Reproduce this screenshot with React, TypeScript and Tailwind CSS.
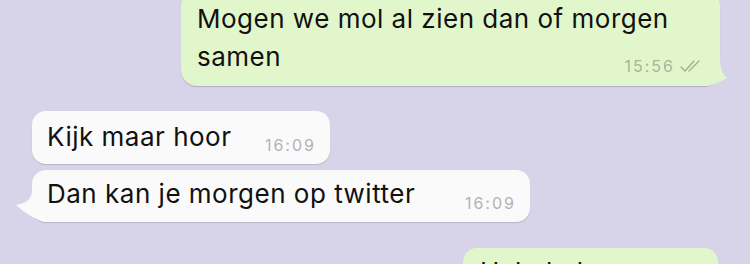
import React from 'react';

const font = { fontFamily: 'Inter, "Liberation Sans", sans-serif' };

// tail on outgoing (green) bubble, bottom right
function OutTail() {
  return (
    <svg className="absolute right-[-8px] bottom-0" width="28" height="32" viewBox="0 0 28 32">
      <path d="M20 0 C20 12 21 19 27 24 C22 27 16 30 8 32 L0 32 L0 0 Z" fill="#e1f7cb" />
    </svg>
  );
}

// tail on incoming (white) bubble, bottom left
function InTail() {
  return (
    <svg className="absolute left-[-16px] bottom-0" width="40" height="32" viewBox="0 0 40 32">
      <path d="M16 0 C16 8 12 13 0 15 C7 21 18 30 30 32 L40 32 L40 0 Z" fill="#fafafa" />
    </svg>
  );
}

function Checks() {
  return (
    <svg width="24" height="14" viewBox="0 0 24 14" className="ml-[5px]">
      <path d="M1 8 L5 12 L14 2" fill="none" stroke="#a2b296" strokeWidth="1.4" strokeLinecap="round" />
      <path d="M9 12 L19 2" fill="none" stroke="#a2b296" strokeWidth="1.4" strokeLinecap="round" />
    </svg>
  );
}

export default function App() {
  return (
    <div className="w-[750px] h-[264px] overflow-hidden bg-[#d7d4ea] flex flex-col" style={font}>
      {/* outgoing */}
      <div className="flex justify-end pr-[30px] mt-[-10px]">
        <div className="relative w-[539px] h-[96px] bg-[#e1f7cb] rounded-[16px] shadow-[0_1px_1px_rgba(0,0,0,0.18)] pl-[16px] pt-[10px]">
          <OutTail />
          <div className="relative text-[26px] leading-[38px] text-[#111] tracking-[0.5px]">
            Mogen we mol al zien dan of morgen<br />samen
          </div>
          <div className="absolute right-[16px] bottom-[10px] flex items-center text-[16px] leading-[20px] tracking-[2px] text-[#a6b59a]">
            15:56<Checks />
          </div>
        </div>
      </div>

      {/* incoming */}
      <div className="flex flex-col gap-[6px] pl-[32px] mt-[25px]">
        <div className="relative w-[298px] h-[53px] bg-[#fafafa] rounded-[14px] shadow-[0_1px_1px_rgba(0,0,0,0.15)] flex items-start pl-[15px] pt-[11px]">
          <span className="text-[26px] leading-[30px] text-[#111] tracking-[0.5px]">Kijk maar hoor</span>
          <span className="absolute right-[14px] bottom-[9px] text-[16px] leading-[20px] tracking-[2px] text-[#b3b3b3]">16:09</span>
        </div>
        <div className="relative w-[498px] h-[52px] bg-[#fafafa] rounded-[14px] shadow-[0_1px_1px_rgba(0,0,0,0.15)] flex items-start pl-[15px] pt-[9px]">
          <InTail />
          <span className="relative text-[26px] leading-[30px] text-[#111] tracking-[0.5px]">Dan kan je morgen op twitter</span>
          <span className="absolute right-[14px] bottom-[9px] text-[16px] leading-[20px] tracking-[2px] text-[#b3b3b3]">16:09</span>
        </div>
      </div>

      {/* outgoing, cut off */}
      <div className="flex justify-end pr-[32px] mt-[26px]">
        <div className="w-[255px] h-[60px] shrink-0 bg-[#e1f7cb] rounded-[14px] pl-[17px] pt-[9px]">
          <span className="text-[26px] leading-[30px] text-[#111] tracking-[0.5px]">Hahahaha</span>
        </div>
      </div>
    </div>
  );
}
